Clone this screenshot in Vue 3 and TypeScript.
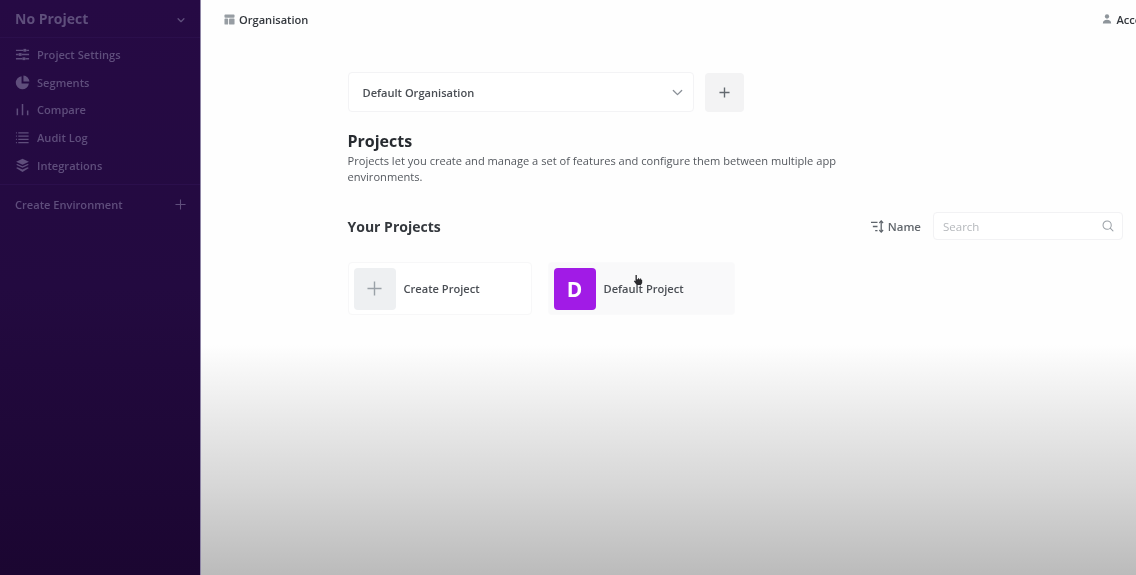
<script setup lang="ts">
const navItems = ['Project Settings', 'Segments', 'Compare', 'Audit Log', 'Integrations']
</script>

<template>
  <div class="page">
    <aside class="sidebar">
      <div class="project-head">
        <span>No Project</span>
        <svg class="chev" viewBox="0 0 12 12" width="10" height="10" fill="none" stroke="currentColor" stroke-width="1.6" stroke-linecap="round" stroke-linejoin="round">
          <path d="M2.5 4.5 6 8l3.5-3.5" />
        </svg>
      </div>

      <nav class="nav">
        <a v-for="(item, i) in navItems" :key="item" class="nav-item">
          <svg v-if="i === 0" viewBox="0 0 16 16" width="15" height="15" fill="none" stroke="currentColor" stroke-width="1.4">
            <path d="M1 3.5h8M12 3.5h3M1 8h3M7 8h8M1 12.5h7M11 12.5h4" />
            <rect x="9" y="2" width="3" height="3" fill="currentColor" stroke="none" />
            <rect x="4" y="6.5" width="3" height="3" fill="currentColor" stroke="none" />
            <rect x="8" y="11" width="3" height="3" fill="currentColor" stroke="none" />
          </svg>
          <svg v-else-if="i === 1" viewBox="0 0 16 16" width="15" height="15" fill="currentColor">
            <path d="M7 1.2a7 7 0 1 0 7.8 7.8H7z" />
            <path d="M9 .6V7h6.400A6.700 6.700 0 0 0 9 .6z" />
          </svg>
          <svg v-else-if="i === 2" viewBox="0 0 16 16" width="15" height="15" fill="none" stroke="currentColor" stroke-width="1.6">
            <path d="M2.5 7v7M8 2v12M13.5 9v5" />
          </svg>
          <svg v-else-if="i === 3" viewBox="0 0 16 16" width="15" height="15" fill="none" stroke="currentColor" stroke-width="1.3">
            <path d="M3.5 3h11M3.500 6.500h11M3.500 10h11M3.500 13.500h11M1 3h1M1 6.500h1M1 10h1M1 13.500h1" />
          </svg>
          <svg v-else viewBox="0 0 16 16" width="15" height="15" fill="currentColor">
            <path d="M8 .8 14.800 4 8 7.200 1.200 4z" />
            <path d="M2.600 6.300 8 8.800l5.400-2.500 1.400.9L8 10.500 1.200 7.200z" />
            <path d="M2.600 9.800 8 12.300l5.400-2.500 1.400.9L8 15 1.200 10.700z" />
          </svg>
          <span>{{ item }}</span>
        </a>
      </nav>

      <div class="env-row">
        <span>Create Environment</span>
        <svg viewBox="0 0 12 12" width="11" height="11" fill="none" stroke="currentColor" stroke-width="1.2">
          <path d="M6 .5v11M.5 6h11" />
        </svg>
      </div>
    </aside>

    <main class="main">
      <header class="topbar">
        <div class="top-link">
          <svg viewBox="0 0 12 12" width="11" height="11" fill="#979da3">
            <rect x="0.5" y="0.500" width="11" height="3.500" rx="1" />
            <rect x="0.5" y="5" width="4" height="6.500" rx="1" />
            <rect x="5.5" y="5" width="6" height="6.500" rx="1" />
          </svg>
          <span>Organisation</span>
        </div>
        <div class="top-link account">
          <svg viewBox="0 0 12 12" width="10" height="12" fill="#8e959b">
            <circle cx="6" cy="3" r="2.600" />
            <path d="M1 11.500c0-3 2-4.500 5-4.500s5 1.500 5 4.500z" />
          </svg>
          <span>Account</span>
        </div>
      </header>

      <section class="content">
        <div class="org-row">
          <div class="org-select">
            <span>Default Organisation</span>
            <svg viewBox="0 0 14 14" width="13" height="13" fill="none" stroke="#8a9097" stroke-width="1.4" stroke-linecap="round" stroke-linejoin="round">
              <path d="M2.500 4.800 7 9.300l4.500-4.500" />
            </svg>
          </div>
          <button class="add-btn" aria-label="Add organisation">
            <svg viewBox="0 0 12 12" width="11" height="11" fill="none" stroke="#63696f" stroke-width="1.5">
              <path d="M6 .5v11M.5 6h11" />
            </svg>
          </button>
        </div>

        <h1 class="title">Projects</h1>
        <p class="desc">Projects let you create and manage a set of features and configure them between multiple app environments.</p>

        <div class="list-head">
          <h2 class="subtitle">Your Projects</h2>
          <div class="list-tools">
            <div class="sort">
              <svg viewBox="0 0 16 14" width="15" height="13" fill="none" stroke="#5f656c" stroke-width="1.4">
                <path d="M1 2.500h7M3 7h5M5.500 11.500h2.500" />
                <path d="M12 1v12" />
                <path d="M10 3.200 12 1l2 2.200M10 10.800 12 13l2-2.200" />
              </svg>
              <span>Name</span>
            </div>
            <div class="search">
              <span>Search</span>
              <svg viewBox="0 0 14 14" width="12" height="12" fill="none" stroke="#9aa0a6" stroke-width="1.2" stroke-linecap="round">
                <circle cx="6" cy="6" r="4.800" />
                <path d="m9.600 9.600 3.200 3.200" />
              </svg>
            </div>
          </div>
        </div>

        <div class="cards">
          <div class="card">
            <div class="card-icon card-icon--new">
              <svg viewBox="0 0 16 16" width="15" height="15" fill="none" stroke="#9aa1a8" stroke-width="1.5">
                <path d="M8 .5v15M.5 8h15" />
              </svg>
            </div>
            <span class="card-name">Create Project</span>
          </div>
          <div class="card card--hover">
            <div class="card-icon card-icon--project">D</div>
            <span class="card-name">Default Project</span>
            <svg class="cursor" viewBox="0 0 12 14" width="10" height="12" fill="#2b2b2e">
              <path d="M3 1h1.600v5H6V4.800h1.300V6h1.200V5.200h1.200V6.300L11 7v3.500L9.500 13H4.500L1 8.500l1-.8L3 8.500z" />
            </svg>
          </div>
        </div>
      </section>
    </main>
  </div>
</template>

<style>
html,
body {
  margin: 0;
  overflow: hidden;
}
</style>

<style scoped>
.page {
  display: flex;
  width: 1136px;
  height: 575px;
  overflow: hidden;
  font-family: 'Open Sans', 'Liberation Sans', sans-serif;
  color: #3f444a;
  filter: blur(0.45px);
}

/* sidebar */
.sidebar {
  width: 201px;
  flex-shrink: 0;
  border-right: 1px solid #8f86a6;
  box-sizing: border-box;
  background: linear-gradient(180deg, #260a44 0%, #230a40 50%, #1b0631 100%);
  color: #5f4e7c;
}

.project-head {
  display: flex;
  align-items: center;
  justify-content: space-between;
  height: 38px;
  padding: 0 14px 0 15px;
  font-size: 14px;
  font-weight: 700;
  color: #5f4f7c;
  border-bottom: 1px solid #2b0f4c;
  box-sizing: border-box;
}

.chev {
  margin-top: 3px;
}

.nav {
  display: flex;
  flex-direction: column;
  padding-top: 2.5px;
}

.nav-item {
  display: flex;
  align-items: center;
  gap: 7px;
  height: 27.75px;
  padding-left: 15px;
  font-size: 11.1px;
  font-weight: 600;
}

.env-row {
  display: flex;
  align-items: center;
  justify-content: space-between;
  margin-top: 5px;
  height: 39px;
  padding: 0 14px 0 15px;
  border-top: 1px solid #2b0f4c;
  font-size: 11.1px;
  font-weight: 600;
}

/* main */
.main {
  flex: 1;
  min-width: 0;
  background: linear-gradient(180deg, #fefefe 0%, #fefefe 60%, #ececec 71%, #d6d6d6 85%, #bbbbbb 100%);
}

.topbar {
  display: flex;
  align-items: center;
  justify-content: space-between;
  height: 38px;
  padding-left: 23px;
}

.top-link {
  display: flex;
  align-items: center;
  gap: 4px;
  font-size: 11.1px;
  font-weight: 600;
  color: #33373d;
  flex-shrink: 0;
}

.account {
  margin-right: -24px;
}

.content {
  width: 775.5px;
  margin-left: 146.5px;
  padding-top: 34px;
}

.org-row {
  display: flex;
  align-items: center;
  gap: 11px;
}

.org-select {
  display: flex;
  align-items: center;
  justify-content: space-between;
  width: 346px;
  height: 40px;
  box-sizing: border-box;
  padding: 0 9px 0 14px;
  background: #fff;
  border: 1px solid #f3f3f5;
  border-radius: 4px;
  font-size: 11.1px;
  font-weight: 600;
  color: #4a4e54;
}

.add-btn {
  display: flex;
  align-items: center;
  justify-content: center;
  width: 39px;
  height: 39px;
  padding: 0;
  border: none;
  border-radius: 4px;
  background: #f3f3f4;
}

.title {
  margin: 18px 0 0;
  font-size: 16px;
  line-height: 22px;
  font-weight: 700;
  color: #272b30;
}

.desc {
  width: 500px;
  margin: 1px 0 0;
  padding-bottom: 5px;
  font-size: 11.1px;
  line-height: 16px;
  color: #54585e;
}

.list-head {
  display: flex;
  align-items: center;
  justify-content: space-between;
  margin-top: 22px;
  height: 28px;
}

.subtitle {
  margin: 0;
  font-size: 14px;
  font-weight: 700;
  color: #34383d;
}

.list-tools {
  display: flex;
  align-items: center;
  gap: 12px;
}

.sort {
  display: flex;
  align-items: center;
  gap: 3px;
  font-size: 11.5px;
  font-weight: 600;
  color: #62676d;
}

.search {
  display: flex;
  align-items: center;
  justify-content: space-between;
  width: 190px;
  height: 28px;
  box-sizing: border-box;
  padding: 0 8px 0 9px;
  background: #fff;
  border: 1px solid #f2f2f4;
  border-radius: 4px;
  font-size: 11.5px;
  color: #b5b8bc;
}

.cards {
  display: flex;
  gap: 16px;
  margin-top: 22px;
}

.card {
  position: relative;
  display: flex;
  align-items: center;
  gap: 8px;
  width: 184px;
  height: 53px;
  box-sizing: border-box;
  padding-left: 5px;
  border: 1px solid #f7f7f8;
  border-radius: 4px;
  background: #fff;
}

.card--hover {
  width: 187px;
  border-color: #fafafb;
  background: #f9f9fa;
}

.card-icon {
  display: flex;
  align-items: center;
  justify-content: center;
  width: 42px;
  height: 42px;
  border-radius: 4px;
  flex-shrink: 0;
}

.card-icon--new {
  background: #eef0f2;
}

.card-icon--project {
  background: #a11be6;
  color: #fff;
  font-size: 21px;
  font-weight: 700;
}

.card-name {
  font-size: 11.1px;
  font-weight: 600;
  color: #4a4e54;
}

.cursor {
  position: absolute;
  left: 84px;
  top: 11px;
}
</style>
